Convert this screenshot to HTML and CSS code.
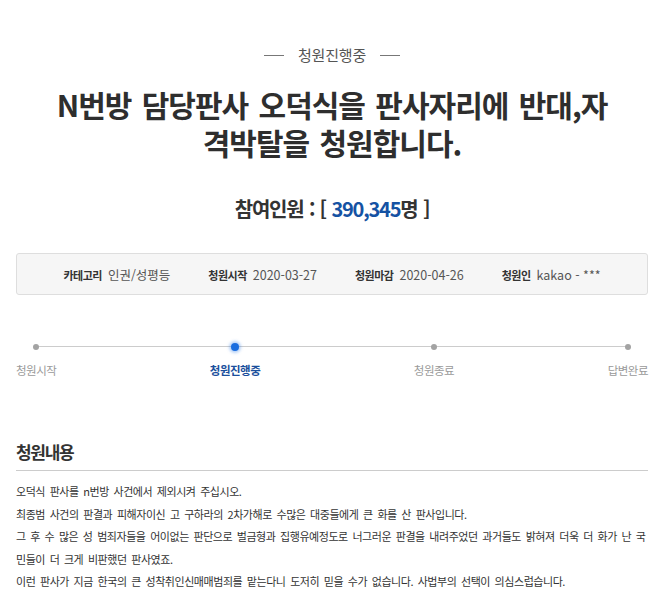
FILE: index.html
```html
<!DOCTYPE html>
<html lang="ko">
<head>
<meta charset="utf-8">
<title>청원진행중</title>
<link rel="stylesheet" href="styles.css">
</head>
<body>
<div class="page">
  <div class="status"><span class="dash"></span><span class="status-text">청원진행중</span><span class="dash"></span></div>
  <h1 class="title">N번방 담당판사 오덕식을 판사자리에 반대,자격박탈을 청원합니다.</h1>
  <p class="count">참여인원 : [ <span class="num">390,345</span>명 ]</p>
  <ul class="info">
    <li><span class="label">카테고리</span><span class="value">인권/성평등</span></li>
    <li><span class="label">청원시작</span><span class="value">2020-03-27</span></li>
    <li><span class="label">청원마감</span><span class="value">2020-04-26</span></li>
    <li><span class="label">청원인</span><span class="value">kakao - ***</span></li>
  </ul>
  <ol class="progress">
    <li class="step"><span class="dot"></span><span class="step-label">청원시작</span></li>
    <li class="step active"><span class="dot"></span><span class="step-label">청원진행중</span></li>
    <li class="step"><span class="dot"></span><span class="step-label">청원종료</span></li>
    <li class="step"><span class="dot"></span><span class="step-label">답변완료</span></li>
  </ol>
  <h2 class="section-title">청원내용</h2>
  <div class="content">
    <p>오덕식 판사를 n번방 사건에서 제외시켜 주십시오.</p>
    <p>최종범 사건의 판결과 피해자이신 고 구하라의 2차가해로 수많은 대중들에게 큰 화를 산 판사입니다.</p>
    <p>그 후 수 많은 성 범죄자들을 어이없는 판단으로 벌금형과 집행유예정도로 너그러운 판결을 내려주었던 과거들도 밝혀져 더욱 더 화가 난 국민들이 더 크게 비판했던 판사였죠.</p>
    <p>이런 판사가 지금 한국의 큰 성착취인신매매범죄를 맡는다니 도저히 믿을 수가 없습니다. 사법부의 선택이 의심스럽습니다.</p>
  </div>
</div>
</body>
</html>
```

FILE: styles.css
```css
* {
  box-sizing: border-box;
  margin: 0;
  padding: 0;
}

body {
  font-family: "Noto Sans CJK KR", "Noto Sans", sans-serif;
  color: #333;
  background: #fff;
}

.page {
  width: 632px;
  margin-left: 16px;
  padding-top: 45px;
}

.status {
  display: flex;
  justify-content: center;
  align-items: center;
  font-size: 15px;
  line-height: 20px;
  color: #555;
}

.status-text {
  letter-spacing: -0.2px;
}

.status .dash {
  width: 20px;
  height: 1px;
  background: #777;
  margin: 0 14px;
}

.title {
  margin-top: 20px;
  padding: 0 38px;
  text-align: center;
  font-size: 30px;
  line-height: 38px;
  font-weight: 700;
  letter-spacing: -1px;
  word-spacing: 3px;
  color: #2e2e2e;
}

.count {
  margin-top: 34px;
  text-align: center;
  font-size: 20px;
  line-height: 28px;
  font-weight: 700;
  letter-spacing: -1.2px;
  word-spacing: 1px;
  color: #333;
}

.count .num {
  color: #1552a3;
}

.info {
  margin-top: 30px;
  display: flex;
  justify-content: center;
  gap: 38px;
  list-style: none;
  background: #f6f6f6;
  border: 1px solid #dedede;
  border-radius: 3px;
  padding: 11px 0 9px;
  line-height: 20px;
}

.info li {
  display: flex;
  align-items: baseline;
  gap: 6px;
}

.info .label {
  font-size: 11px;
  font-weight: 700;
  letter-spacing: -0.5px;
  color: #333;
}

.info .value {
  font-size: 12.5px;
  letter-spacing: 0;
  color: #555;
}

.progress {
  margin-top: 45px;
  position: relative;
  display: flex;
  justify-content: space-between;
  list-style: none;
}

.progress::before {
  content: "";
  position: absolute;
  left: 21px;
  right: 21px;
  top: 6px;
  height: 1px;
  background: #ccc;
}

.step {
  display: flex;
  flex-direction: column;
  align-items: center;
}

.step .dot {
  position: relative;
  width: 6px;
  height: 6px;
  margin: 3.5px 0;
  border-radius: 50%;
  background: #a3a3a3;
}

.step-label {
  margin-top: 9px;
  font-size: 11.5px;
  line-height: 16px;
  letter-spacing: -0.5px;
  color: #9a9a9a;
}

.step.active .dot {
  width: 8px;
  height: 8px;
  margin: 2.5px 0;
  background: #1a6ddf;
  box-shadow: 0 0 3px 2px rgba(40, 120, 230, 0.35);
}

.step.active .step-label {
  font-weight: 700;
  color: #1b4f9c;
}

.section-title {
  margin-top: 62px;
  padding-bottom: 6px;
  border-bottom: 1px solid #ccc;
  font-size: 17px;
  line-height: 24px;
  letter-spacing: -1.3px;
  font-weight: 700;
  color: #333;
}

.content {
  padding-top: 9px;
}

.content p {
  font-size: 11px;
  line-height: 22.5px;
  letter-spacing: -0.45px;
  word-spacing: 2px;
  color: #333;
}
```
